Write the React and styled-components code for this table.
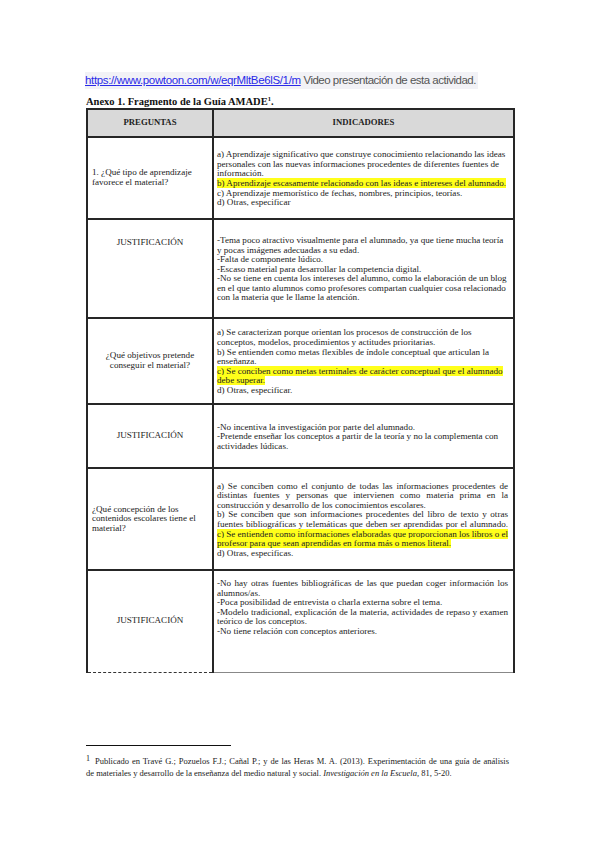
import React from "react";
import styled, { createGlobalStyle } from "styled-components";

const GlobalStyle = createGlobalStyle`
  html, body {
    margin: 0;
    padding: 0;
    background: #ffffff;
  }
  body {
    font-family: "Liberation Serif", "Times New Roman", serif;
    color: #222;
  }
`;

const rows = [
  {
    height: 82,
    left: ["1. ¿Qué tipo de aprendizaje", "favorece el material?"],
    leftAlign: "left",
    leftValign: "middle",
    rightValign: "middle",
    lines: [
      { t: "a) Aprendizaje significativo que construye conocimiento relacionando las ideas" },
      { t: "personales con las nuevas informaciones procedentes de diferentes fuentes de" },
      { t: "información." },
      { t: "b) Aprendizaje escasamente relacionado con las ideas e intereses del alumnado.", hl: true },
      { t: "c) Aprendizaje memorístico de fechas, nombres, principios, teorías." },
      { t: "d) Otras, especificar" },
    ],
  },
  {
    height: 99,
    left: ["JUSTIFICACIÓN"],
    leftAlign: "center",
    leftValign: "top",
    rightValign: "middle",
    lines: [
      { t: "-Tema poco atractivo visualmente para el alumnado, ya que tiene mucha teoría" },
      { t: "y pocas imágenes adecuadas a su edad." },
      { t: "-Falta de componente lúdico." },
      { t: "-Escaso material para desarrollar la competencia digital." },
      { t: "-No se tiene en cuenta los intereses del alumno, como la elaboración de un blog" },
      { t: "en el que tanto alumnos como profesores compartan cualquier cosa relacionado" },
      { t: "con la materia que le llame la atención." },
    ],
  },
  {
    height: 86,
    left: ["¿Qué objetivos pretende", "conseguir el material?"],
    leftAlign: "center",
    leftValign: "middle",
    rightValign: "middle",
    lines: [
      { t: "a) Se caracterizan porque orientan los procesos de construcción de los" },
      { t: "conceptos, modelos, procedimientos y actitudes prioritarias." },
      { t: "b) Se entienden como metas flexibles de índole conceptual que articulan la" },
      { t: "enseñanza." },
      { t: "c) Se conciben como metas terminales de carácter conceptual que el alumnado", hl: true },
      { t: "debe superar.", hl: true },
      { t: "d) Otras, especificar." },
    ],
  },
  {
    height: 64,
    left: ["JUSTIFICACIÓN"],
    leftAlign: "center",
    leftValign: "middle",
    rightValign: "middle",
    lines: [
      { t: "-No incentiva la investigación por parte del alumnado." },
      { t: "-Pretende enseñar los conceptos a partir de la teoría y no la complementa con" },
      { t: "actividades lúdicas." },
    ],
  },
  {
    height: 102,
    left: ["¿Qué concepción de los", "contenidos escolares tiene el", "material?"],
    leftAlign: "left",
    leftValign: "middle",
    rightValign: "middle",
    lines: [
      { t: "a) Se conciben como el conjunto de todas las informaciones procedentes de", j: true },
      { t: "distintas fuentes y personas que intervienen como materia prima en la", j: true },
      { t: "construcción y desarrollo de los conocimientos escolares." },
      { t: "b) Se conciben que son informaciones procedentes del libro de texto y otras", j: true },
      { t: "fuentes bibliográficas y telemáticas que deben ser aprendidas por el alumnado.", j: true },
      { t: "c) Se entienden como informaciones elaboradas que proporcionan los libros o el", j: true, hl: true },
      { t: "profesor para que sean aprendidas en forma más o menos literal.", hl: true },
      { t: "d) Otras, especificas." },
    ],
  },
  {
    height: 102,
    last: true,
    left: ["JUSTIFICACIÓN"],
    leftAlign: "center",
    leftValign: "middle",
    rightValign: "top",
    lines: [
      { t: "-No hay otras fuentes bibliográficas de las que puedan coger información los", j: true },
      { t: "alumnos/as." },
      { t: "-Poca posibilidad de entrevista o charla externa sobre el tema." },
      { t: "-Modelo tradicional, explicación de la materia, actividades de repaso y examen", j: true },
      { t: "teórico de los conceptos." },
      { t: "-No tiene relación con conceptos anteriores." },
    ],
  },
];

function App() {
  return (
    <>
      <GlobalStyle />
      <Page>
        <LinkLine>
          <Link href="#">https://www.powtoon.com/w/eqrMltBe6lS/1/m</Link>
          <LinkNote> Video presentación de esta actividad.</LinkNote>
        </LinkLine>

        <Title>
          Anexo 1. Fragmento de la Guía AMADE<sup>1</sup>.
        </Title>

        <Table>
          <colgroup>
            <col style={{ width: 126 }} />
            <col style={{ width: 301 }} />
          </colgroup>
          <thead>
            <tr>
              <HeadCell>PREGUNTAS</HeadCell>
              <HeadCell>INDICADORES</HeadCell>
            </tr>
          </thead>
          <tbody>
            {rows.map((row, i) => (
              <Row key={i} $height={row.height}>
                <QuestionCell $align={row.leftAlign} $valign={row.leftValign} $last={row.last}>
                  {row.left.map((l, k) => (
                    <div key={k}>{l}</div>
                  ))}
                </QuestionCell>
                <AnswerCell $valign={row.rightValign} $last={row.last}>
                  {row.lines.map((line, k) => (
                    <Line key={k} $justify={line.j}>
                      {line.hl ? <Mark>{line.t}</Mark> : line.t}
                    </Line>
                  ))}
                </AnswerCell>
              </Row>
            ))}
          </tbody>
        </Table>

        <FootRule />
        <Footnote>
          <Line $justify>
            <FootSup>1</FootSup> Publicado en Travé G.; Pozuelos F.J.; Cañal P.; y de las Heras M. A. (2013). Experimentación de una guía de análisis
          </Line>
          <Line>
            de materiales y desarrollo de la enseñanza del medio natural y social. <i>Investigación en la Escuela,</i> 81, 5-20.
          </Line>
        </Footnote>
      </Page>
    </>
  );
}

const Page = styled.div`
  width: 599px;
  height: 848px;
  box-sizing: border-box;
  padding: 70px 0 0 86px;
  background: #fff;
`;

const LinkLine = styled.div`
  display: inline-block;
  font-family: "Liberation Sans", Arial, sans-serif;
  font-size: 11.5px;
  line-height: 17px;
  background: #f2f2f6;
  padding: 0 2px 0 0;
  margin-left: -1px;
`;

const Link = styled.a`
  color: #2a2ae8;
  text-decoration: underline;
  letter-spacing: -0.35px;
`;

const LinkNote = styled.span`
  color: #555;
  letter-spacing: -0.5px;
`;

const Title = styled.div`
  margin-top: 6px;
  font-weight: bold;
  font-size: 10.5px;
  line-height: 13px;
  color: #111;

  sup {
    font-size: 6.5px;
    line-height: 0;
    vertical-align: 4px;
  }
`;

const Table = styled.table`
  width: 427px;
  border-collapse: collapse;
  table-layout: fixed;
  font-size: 9.1px;
  line-height: 9.6px;
  color: #222;
`;

const HeadCell = styled.th`
  height: 26px;
  background: #d9d9d9;
  border: 2px solid #262626;
  font-weight: bold;
  font-size: 8.7px;
  text-align: center;
  vertical-align: middle;
  color: #222;
  padding: 0;
`;

const Row = styled.tr`
  height: ${(p) => p.$height}px;
`;

const QuestionCell = styled.td`
  border-left: 2px solid #262626;
  border-right: 2px solid #262626;
  border-top: 2px solid #262626;
  border-bottom: ${(p) => (p.$last ? "1px dashed #333" : "2px solid #262626")};
  text-align: ${(p) => p.$align};
  vertical-align: ${(p) => p.$valign};
  padding: ${(p) => (p.$valign === "top" ? "18px 4px 0 4px" : "0 4px")};
  line-height: 9.6px;
`;

const AnswerCell = styled.td`
  border-left: 2px solid #262626;
  border-right: 2px solid #262626;
  border-top: 2px solid #262626;
  border-bottom: ${(p) => (p.$last ? "1px solid #888" : "2px solid #262626")};
  vertical-align: ${(p) => p.$valign};
  padding: ${(p) => (p.$valign === "top" ? "8px 5px 0 3px" : "4px 5px 2px 3px")};
`;

const Line = styled.div`
  white-space: nowrap;
  text-align: ${(p) => (p.$justify ? "justify" : "left")};
  text-align-last: ${(p) => (p.$justify ? "justify" : "auto")};
  ${(p) => p.$justify && "white-space: normal; word-spacing: -1.5px;"}
`;

const Mark = styled.span`
  background: #ffff1a;
`;

const FootRule = styled.div`
  margin-top: 72px;
  width: 145px;
  height: 1px;
  background: #111;
`;

const Footnote = styled.div`
  width: 423px;
  margin-top: 9px;
  font-size: 8.5px;
  line-height: 12px;
  color: #222;
`;

const FootSup = styled.span`
  font-size: 8px;
  vertical-align: 3px;
  line-height: 0;
  margin-right: 2px;
`;

export default App;
